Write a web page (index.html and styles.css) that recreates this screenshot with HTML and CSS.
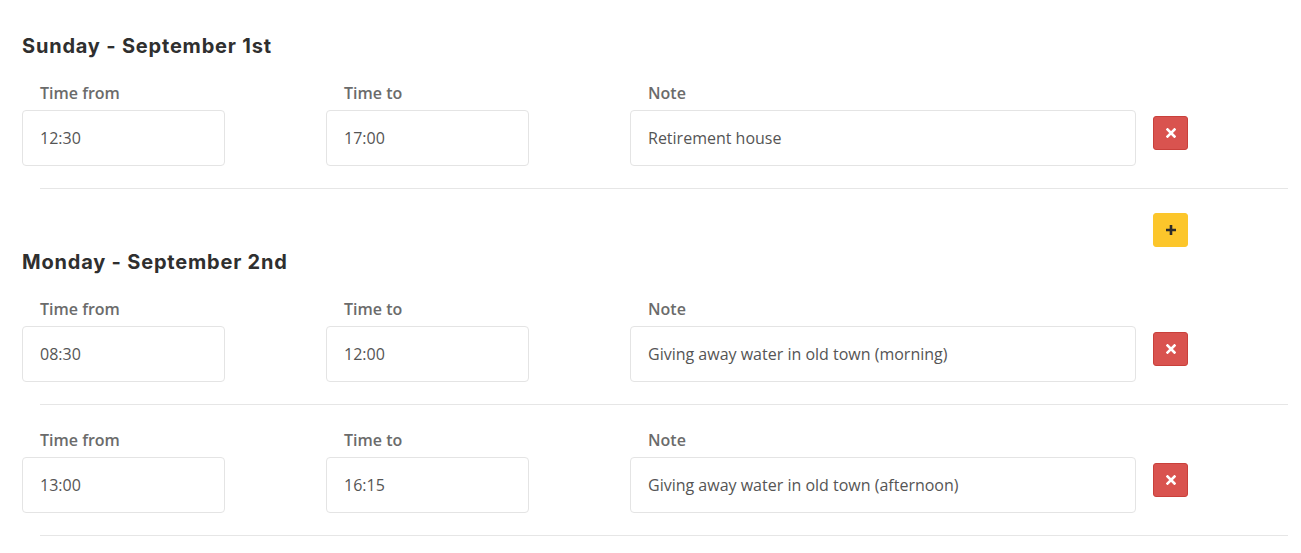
FILE: index.html
```html
<!DOCTYPE html>
<html>
<head>
	<title>Shifts</title>
	<link rel="stylesheet" href="styles.css">
</head>
<body>
	<div class="schedule">

		<h2 class="day-title">Sunday - September 1st</h2>

		<div class="entry">
			<div class="field time">
				<label>Time from</label>
				<input type="text" value="12:30" />
			</div>
			<div class="field time">
				<label>Time to</label>
				<input type="text" value="17:00" />
			</div>
			<div class="field note">
				<label>Note</label>
				<input type="text" value="Retirement house" />
			</div>
			<div class="actions">
				<button class="btn btn-remove" type="button">
					<svg width="10" height="10" viewBox="0 0 10 10"><path d="M1.5 1.5 8.5 8.5M8.5 1.5 1.5 8.5" stroke="#fff" stroke-width="2.6" stroke-linecap="square"/></svg>
				</button>
			</div>
		</div>
		<hr class="divider">

		<div class="add-row">
			<button class="btn btn-add" type="button">
				<svg width="12" height="12" viewBox="0 0 12 12"><path d="M6 1v10M1 6h10" stroke="#2b2b2b" stroke-width="2.6"/></svg>
			</button>
		</div>

		<h2 class="day-title">Monday - September 2nd</h2>

		<div class="entry">
			<div class="field time">
				<label>Time from</label>
				<input type="text" value="08:30" />
			</div>
			<div class="field time">
				<label>Time to</label>
				<input type="text" value="12:00" />
			</div>
			<div class="field note">
				<label>Note</label>
				<input type="text" value="Giving away water in old town (morning)" />
			</div>
			<div class="actions">
				<button class="btn btn-remove" type="button">
					<svg width="10" height="10" viewBox="0 0 10 10"><path d="M1.5 1.5 8.5 8.5M8.5 1.5 1.5 8.5" stroke="#fff" stroke-width="2.6" stroke-linecap="square"/></svg>
				</button>
			</div>
		</div>
		<hr class="divider">

		<div class="entry">
			<div class="field time">
				<label>Time from</label>
				<input type="text" value="13:00" />
			</div>
			<div class="field time">
				<label>Time to</label>
				<input type="text" value="16:15" />
			</div>
			<div class="field note">
				<label>Note</label>
				<input type="text" value="Giving away water in old town (afternoon)" />
			</div>
			<div class="actions">
				<button class="btn btn-remove" type="button">
					<svg width="10" height="10" viewBox="0 0 10 10"><path d="M1.5 1.5 8.5 8.5M8.5 1.5 1.5 8.5" stroke="#fff" stroke-width="2.6" stroke-linecap="square"/></svg>
				</button>
			</div>
		</div>
		<hr class="divider">

	</div>
</body>
</html>
```

FILE: styles.css
```css
body{
	margin:0;
	background:#fff;
	font-family:"Open Sans", "Noto Sans", sans-serif;
	font-size:16px;
	color:#555;
}

.schedule{
	padding:34px 13px 0 22px;
}

	.day-title{
		margin:0 0 24px;
		font-family:Inter, "DejaVu Sans", sans-serif;
		font-weight:700;
		font-size:20px;
		line-height:24px;
		letter-spacing:0.8px;
		color:#2f2f2f;
	}

	.entry{
		display:flex;
		padding-bottom:22px;
	}

		.field{
			display:flex;
			flex-direction:column;
			margin-right:101px;
		}

		.field.time{
			width:203px;
		}

		.field.note{
			width:506px;
			margin-right:17px;
		}

			.field label{
				display:block;
				padding-left:18px;
				margin-bottom:6px;
				line-height:22px;
				font-weight:600;
				color:#6b6b6b;
			}

			.field input{
				box-sizing:border-box;
				width:100%;
				height:56px;
				padding:0 17px;
				border:1px solid #e4e4e4;
				border-radius:4px;
				font-family:inherit;
				font-size:16px;
				color:#555;
				outline:none;
			}

		.actions{
			padding-top:34px;
		}

	.btn{
		display:flex;
		align-items:center;
		justify-content:center;
		box-sizing:border-box;
		width:35px;
		height:34px;
		padding:0;
		border-radius:3px;
		cursor:pointer;
	}

	.btn-remove{
		background:#d9534f;
		border:1px solid #c9403b;
	}

	.btn-add{
		background:#fcc62b;
		border:1px solid #fcc62b;
	}

	.divider{
		margin:0 0 24px 18px;
		border:0;
		border-top:1px solid #e6e6e6;
	}

	.add-row{
		display:flex;
		padding-left:1131px;
		margin-bottom:3px;
	}
```
